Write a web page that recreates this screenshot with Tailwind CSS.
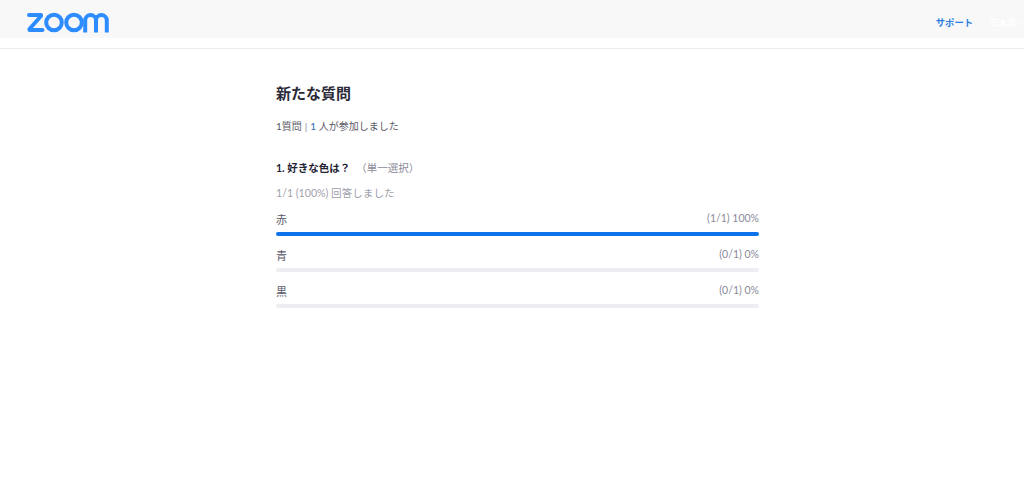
<!DOCTYPE html>
<html lang="ja">
<head>
    <meta charset="UTF-8">
    <meta name="viewport" content="width=device-width, initial-scale=1.0">
    <title>新たな質問</title>
    <script src="https://cdn.jsdelivr.net/npm/@tailwindcss/browser@4"></script>
</head>
<body class="bg-white font-['Lato','Noto_Sans_CJK_JP',sans-serif] text-[#232333] overflow-hidden">

    <!-- Header -->
    <header class="h-[49px] border-b border-[#ececf0]">
        <div class="h-[38px] bg-[#f8f8f8]">
            <div class="h-[46px] flex items-center justify-between pl-[27px]">
                <svg class="w-[83px] h-[21px] -mt-[1px]" viewBox="0 0 83 21" fill="none" stroke="#2d8cff" stroke-width="4">
                    <path d="M2 3h12v1L2.500 17v1h13" stroke-linejoin="round" stroke-linecap="round"/>
                    <circle cx="27" cy="10.500" r="7.800"/>
                    <circle cx="47" cy="10.500" r="7.800"/>
                    <path d="M58.200 20.500V8.500a5.400 5.400 0 0 1 10.800 0v12M69 8.500a5.400 5.400 0 0 1 10.800 0v12"/>
                </svg>
                <nav class="flex items-center gap-[17px] text-[9.300px] font-bold">
                    <a class="text-[#2d7de0] whitespace-nowrap">サポート</a>
                    <a class="flex items-center gap-[4px] text-white text-[8.500px] whitespace-nowrap w-[34px]">
                        日本語
                        <svg class="w-[5px] h-[4px]" viewBox="0 0 5 4" fill="none" stroke="#ffffff" stroke-width="1">
                            <path d="M0 .5l2.500 2.500L5 .5"/>
                        </svg>
                    </a>
                </nav>
            </div>
        </div>
    </header>

    <!-- Poll report -->
    <main class="w-[483px] ml-[276px]">
        <h1 class="mt-[33px] text-[15px] leading-[22px] font-bold text-[#2a2a38]">新たな質問</h1>
        <p class="mt-[14px] text-[10px] leading-[16px] text-[#5a5a68] whitespace-nowrap">1質問<span class="mx-[3px] text-[#8a8a98]">|</span><span class="text-[#2b6cb8]">1</span> 人が参加しました</p>

        <div class="mt-[26px] flex items-center text-[10.500px] leading-[16px]">
            <span class="font-bold">1. 好きな色は？</span>
            <span class="ml-[6px] text-[#8a8a98]">（単一選択）</span>
        </div>
        <p class="mt-[9px] text-[10.600px] leading-[16px] text-[#a0a0ac]">1/1 (100%) 回答しました</p>

        <div class="mt-[10px] flex flex-col gap-[11px]">
            <div>
                <div class="flex justify-between items-center h-[16px] text-[10.500px] text-[#8a8a98]">
                    <span class="pt-[2px] text-[11px] text-[#5a5a68]">赤</span>
                    <span>(1/1) 100%</span>
                </div>
                <div class="mt-[5px] h-[4px] rounded-full bg-[#0e72ed]"></div>
            </div>
            <div>
                <div class="flex justify-between items-center h-[16px] text-[10.500px] text-[#8a8a98]">
                    <span class="pt-[2px] text-[11px] text-[#5a5a68]">青</span>
                    <span>(0/1) 0%</span>
                </div>
                <div class="mt-[5px] h-[4px] rounded-full bg-[#edeef2]"></div>
            </div>
            <div>
                <div class="flex justify-between items-center h-[16px] text-[10.500px] text-[#8a8a98]">
                    <span class="pt-[2px] text-[11px] text-[#5a5a68]">黒</span>
                    <span>(0/1) 0%</span>
                </div>
                <div class="mt-[5px] h-[4px] rounded-full bg-[#edeef2]"></div>
            </div>
        </div>
    </main>

</body>
</html>
